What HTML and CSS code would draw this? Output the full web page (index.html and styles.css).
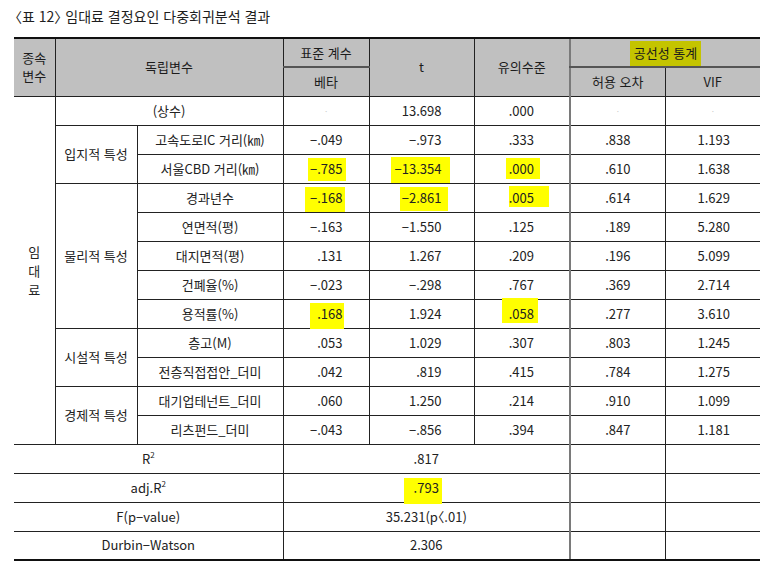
FILE: index.html
```html
<!DOCTYPE html>
<html lang="ko">
<head>
<meta charset="utf-8">
<title>임대료 결정요인 다중회귀분석 결과</title>
<link rel="stylesheet" href="styles.css">
</head>
<body>
<div class="page">
  <p class="title"><span class="br">〈</span>표 12<span class="br">〉</span> 임대료 결정요인 다중회귀분석 결과</p>
  <table class="reg">
    <colgroup>
      <col class="w-dep"><col class="w-cat"><col class="w-var"><col class="w-b"><col class="w-t"><col class="w-p"><col class="w-tol"><col class="w-vif">
    </colgroup>
    <thead>
      <tr>
        <th rowspan="2" class="two">종속<br>변수</th>
        <th rowspan="2" colspan="2">독립변수</th>
        <th class="sub">표준 계수</th>
        <th rowspan="2">t</th>
        <th rowspan="2">유의수준</th>
        <th colspan="2" class="sep sub"><span class="hl hl-olive">공선성 통계</span></th>
      </tr>
      <tr>
        <th>베타</th>
        <th class="sep">허용 오차</th>
        <th>VIF</th>
      </tr>
    </thead>
    <tbody>
      <tr>
        <td rowspan="12" class="dep">임<br>대<br>료</td>
        <td colspan="2">(상수)</td>
        <td><span class="nil">·</span></td>
        <td class="c-t">13.698</td>
        <td class="c-p">.000</td>
        <td class="sep"><span class="nil">·</span></td>
        <td><span class="nil">·</span></td>
      </tr>
      <tr>
        <td rowspan="2">입지적 특성</td>
        <td>고속도로IC 거리(㎞)</td>
        <td class="c-b">−.049</td>
        <td class="c-t">−.973</td>
        <td class="c-p">.333</td>
        <td class="sep c-tol">.838</td>
        <td class="c-vif">1.193</td>
      </tr>
      <tr>
        <td>서울CBD 거리(㎞)</td>
        <td class="c-b"><span class="hl hl-b1">−.785</span></td>
        <td class="c-t"><span class="hl hl-t1">−13.354</span></td>
        <td class="c-p"><span class="hl hl-p1">.000</span></td>
        <td class="sep c-tol">.610</td>
        <td class="c-vif">1.638</td>
      </tr>
      <tr>
        <td rowspan="5">물리적 특성</td>
        <td>경과년수</td>
        <td class="c-b"><span class="hl hl-b2">−.168</span></td>
        <td class="c-t"><span class="hl hl-t2">−2.861</span></td>
        <td class="c-p"><span class="hl hl-p2">.005</span></td>
        <td class="sep c-tol">.614</td>
        <td class="c-vif">1.629</td>
      </tr>
      <tr>
        <td>연면적(평)</td>
        <td class="c-b">−.163</td>
        <td class="c-t">−1.550</td>
        <td class="c-p">.125</td>
        <td class="sep c-tol">.189</td>
        <td class="c-vif">5.280</td>
      </tr>
      <tr>
        <td>대지면적(평)</td>
        <td class="c-b">.131</td>
        <td class="c-t">1.267</td>
        <td class="c-p">.209</td>
        <td class="sep c-tol">.196</td>
        <td class="c-vif">5.099</td>
      </tr>
      <tr>
        <td>건폐율(%)</td>
        <td class="c-b">−.023</td>
        <td class="c-t">−.298</td>
        <td class="c-p">.767</td>
        <td class="sep c-tol">.369</td>
        <td class="c-vif">2.714</td>
      </tr>
      <tr>
        <td>용적률(%)</td>
        <td class="c-b"><span class="hl hl-b3">.168</span></td>
        <td class="c-t">1.924</td>
        <td class="c-p"><span class="hl hl-p3">.058</span></td>
        <td class="sep c-tol">.277</td>
        <td class="c-vif">3.610</td>
      </tr>
      <tr>
        <td rowspan="2">시설적 특성</td>
        <td>층고(M)</td>
        <td class="c-b">.053</td>
        <td class="c-t">1.029</td>
        <td class="c-p">.307</td>
        <td class="sep c-tol">.803</td>
        <td class="c-vif">1.245</td>
      </tr>
      <tr>
        <td>전층직접접안_더미</td>
        <td class="c-b">.042</td>
        <td class="c-t">.819</td>
        <td class="c-p">.415</td>
        <td class="sep c-tol">.784</td>
        <td class="c-vif">1.275</td>
      </tr>
      <tr>
        <td rowspan="2">경제적 특성</td>
        <td>대기업테넌트_더미</td>
        <td class="c-b">.060</td>
        <td class="c-t">1.250</td>
        <td class="c-p">.214</td>
        <td class="sep c-tol">.910</td>
        <td class="c-vif">1.099</td>
      </tr>
      <tr>
        <td>리츠펀드_더미</td>
        <td class="c-b">−.043</td>
        <td class="c-t">−.856</td>
        <td class="c-p">.394</td>
        <td class="sep c-tol">.847</td>
        <td class="c-vif">1.181</td>
      </tr>
      <tr>
        <td colspan="3">R<sup>2</sup></td>
        <td colspan="3">.817</td>
        <td class="sep"></td>
        <td></td>
      </tr>
      <tr>
        <td colspan="3">adj.R<sup>2</sup></td>
        <td colspan="3"><span class="hl hl-adj">.793</span></td>
        <td class="sep"></td>
        <td></td>
      </tr>
      <tr>
        <td colspan="3">F(p−value)</td>
        <td colspan="3">35.231(p<span class="br">〈</span>.01)</td>
        <td class="sep"></td>
        <td></td>
      </tr>
      <tr>
        <td colspan="3">Durbin−Watson</td>
        <td colspan="3">2.306</td>
        <td class="sep"></td>
        <td></td>
      </tr>
    </tbody>
  </table>
</div>
</body>
</html>
```
FILE: styles.css
```css
body {
  margin: 0;
  background: #ffffff;
  color: #222222;
  font-family: "Noto Sans CJK KR", "Noto Sans", sans-serif;
}

.page {
  padding: 6px 0 0 14px;
}

.title {
  margin: 0 0 11px;
  font-size: 14px;
  line-height: 20px;
  color: #1e1e1e;
  padding-left: 1px;
}

.br {
  font-feature-settings: "halt" 1;
}

.reg {
  border-collapse: collapse;
  table-layout: fixed;
  width: 746px;
  font-size: 13px;
}

.w-dep { width: 41px; }
.w-cat { width: 82px; }
.w-var { width: 146px; }
.w-b { width: 86px; }
.w-t { width: 105px; }
.w-p { width: 96px; }
.w-tol { width: 95px; }
.w-vif { width: 95px; }

.reg tr {
  height: 29px;
}

.reg th,
.reg td {
  border: 1px solid #222222;
  padding: 0;
  text-align: center;
  vertical-align: middle;
  font-weight: normal;
  line-height: 18px;
  white-space: nowrap;
}

.reg th:first-child,
.reg td:first-child {
  border-left: none;
}

.reg th:last-child,
.reg td:last-child {
  border-right: none;
}

.reg thead th {
  background: #c0c0c0;
  color: #1c1c1c;
}

.reg thead tr:first-child th {
  border-top: 2px solid #111111;
}

.reg thead .sub {
  border-bottom: 2px solid #555555;
}

.reg tbody tr:last-child td {
  border-bottom: 2px solid #111111;
}

.reg .sep {
  border-left: 2px solid #7a7a7a;
}

.reg .dep {
  line-height: 19px;
}

.reg .two {
  line-height: 18px;
}

.c-b { text-align: right !important; padding-right: 26px !important; }
.c-t { text-align: right !important; padding-right: 32px !important; }
.c-p { text-align: right !important; padding-right: 35px !important; }
.c-tol { text-align: right !important; padding-right: 34px !important; }
.c-vif { text-align: right !important; padding-right: 30px !important; }

.nil {
  color: #c8c8c8;
  font-size: 8px;
}

sup {
  font-size: 8px;
  line-height: 0;
  vertical-align: 6px;
}

.hl {
  display: inline-block;
  background: #ffff00;
  line-height: 18px;
}

.hl-olive { background: #c4c400; padding: 3px 4px 4px 4px; margin: -3px -4px -4px -4px; }
.hl-b1 { padding: 2px 3px 3px 2px; margin: -2px -3px -3px -2px; }
.hl-b2 { padding: 2px 2px 5px 5px; margin: -2px -2px -5px -5px; }
.hl-b3 { padding: 2px 1px 6px 7px; margin: -2px -1px -6px -7px; }
.hl-t1 { padding: 3px 8px 5px 4px; margin: -3px -8px -5px -4px; }
.hl-t2 { padding: 2px 6px 4px 2px; margin: -2px -6px -4px -2px; }
.hl-p1 { padding: 2px 6px 1px 3px; margin: -2px -6px -1px -3px; }
.hl-p2 { padding: 3px 15px 0 0; margin: -3px -15px 0 0; }
.hl-p3 { padding: 7px 4px 0 7px; margin: -7px -4px 0 -7px; }
.hl-adj { padding: 1px 3px 7px 10px; margin: -1px -3px -7px -10px; }
```
